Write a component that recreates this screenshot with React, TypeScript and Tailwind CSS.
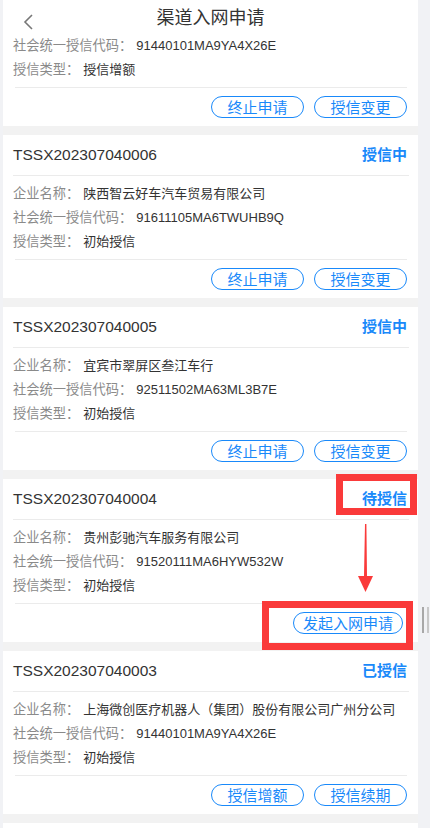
import React from 'react';

type Item = {
  no?: string;
  status?: string;
  name?: string;
  code: string;
  type: string;
  actions: string[];
  partial?: boolean;
};

const items: Item[] = [
  { partial: true, code: '91440101MA9YA4X26E', type: '授信增额', actions: ['终止申请', '授信变更'] },
  { no: 'TSSX202307040006', status: '授信中', name: '陕西智云好车汽车贸易有限公司', code: '91611105MA6TWUHB9Q', type: '初始授信', actions: ['终止申请', '授信变更'] },
  { no: 'TSSX202307040005', status: '授信中', name: '宜宾市翠屏区叁江车行', code: '92511502MA63ML3B7E', type: '初始授信', actions: ['终止申请', '授信变更'] },
  { no: 'TSSX202307040004', status: '待授信', name: '贵州彭驰汽车服务有限公司', code: '91520111MA6HYW532W', type: '初始授信', actions: ['发起入网申请'] },
  { no: 'TSSX202307040003', status: '已授信', name: '上海微创医疗机器人（集团）股份有限公司广州分公司', code: '91440101MA9YA4X26E', type: '初始授信', actions: ['授信增额', '授信续期'] },
];

const font = { fontFamily: '"Liberation Sans", "Noto Sans CJK SC", sans-serif' };

const Row: React.FC<{ label: string; value: string }> = ({ label, value }) => (
  <div className="flex items-center h-[24px] whitespace-nowrap">
    <span className="text-[13.25px] text-[#8a8a8a]">{label}</span>
    <span className="ml-[4px] text-[13px] text-[#333]">{value}</span>
  </div>
);

const Card: React.FC<{ item: Item; marked?: boolean }> = ({ item, marked }) => (
  <div className="relative bg-white h-[163px] flex flex-col">
    {/* top part of the first card sits under the header */}
    {item.partial ? (
      <div className="h-[71px]" />
    ) : (
      <>
        <div className="h-[40px] flex items-center justify-between pl-[10px] pr-[11px]">
          <span className="text-[15.5px] text-[#333]">{item.no}</span>
          <span className="text-[15px] font-bold text-[#1989fa]">{item.status}</span>
        </div>
        <div className="h-px bg-[#ebebeb] ml-[10px] mr-[9px]" />
        <div className="pt-[6px] pl-[10px]">
          <Row label="企业名称：" value={item.name ?? ''} />
        </div>
      </>
    )}
    <div className="h-[53px] pl-[10px]">
      <Row label="社会统一授信代码：" value={item.code} />
      <Row label="授信类型：" value={item.type} />
    </div>
    <div className="h-px bg-[#ebebeb] ml-[12px] mr-[11px]" />
    <div className="flex-1 flex items-center justify-end gap-[10px] pr-[11px]">
      {item.actions.map((a) => (
        <button
          key={a}
          className={`h-[22px] ${a.length > 4 ? 'w-[110px] mr-[4px]' : 'w-[93px]'} rounded-full border border-[#1989fa] text-[15px] leading-none text-[#1989fa] flex items-center justify-center`}
        >
          {a}
        </button>
      ))}
    </div>
    {marked && (
      <>
        <div className="absolute left-[333px] top-[-5px] w-[81px] h-[41px] border-[7px] border-[#fa3a3a]" />
        <svg className="absolute left-[355px] top-[45px]" width="15" height="68" viewBox="0 0 15 68">
          <polygon points="7,0 8.4,0 9,52 15,52 7.5,68 0,52 6,52" fill="#fa3a3a" />
        </svg>
        <div className="absolute left-[259px] top-[122px] w-[151px] h-[49px] border-[7px] border-[#fa3a3a] z-10" />
      </>
    )}
  </div>
);

export default function App() {
  return (
    <div className="min-h-[828px] bg-[#f1f2f5] overflow-hidden" style={font}>
      <div className="fixed top-0 left-[3px] w-[415px] h-[37px] bg-white z-20 flex items-center justify-center">
        <svg className="absolute left-[19px] top-[13px]" width="14" height="18" viewBox="0 0 14 18">
          <polyline points="10,2 3,9 10,16" fill="none" stroke="#777" strokeWidth="1.6" />
        </svg>
        <span className="text-[18px] text-[#333]">渠道入网申请</span>
      </div>
      <div className="fixed right-[1px] top-[607px] flex gap-[3px] z-20">
        <div className="w-[2px] h-[26px] bg-[#a8a8a8]" />
        <div className="w-[2px] h-[26px] bg-[#c8c8c8]" />
      </div>
      <div className="ml-[3px] w-[415px] mt-[-37px] flex flex-col gap-[9px] bg-[#f2f2f2]">
        {items.map((it, i) => (
          <Card key={i} item={it} marked={i === 3} />
        ))}
        <div className="bg-white h-[40px]" />
      </div>
    </div>
  );
}
